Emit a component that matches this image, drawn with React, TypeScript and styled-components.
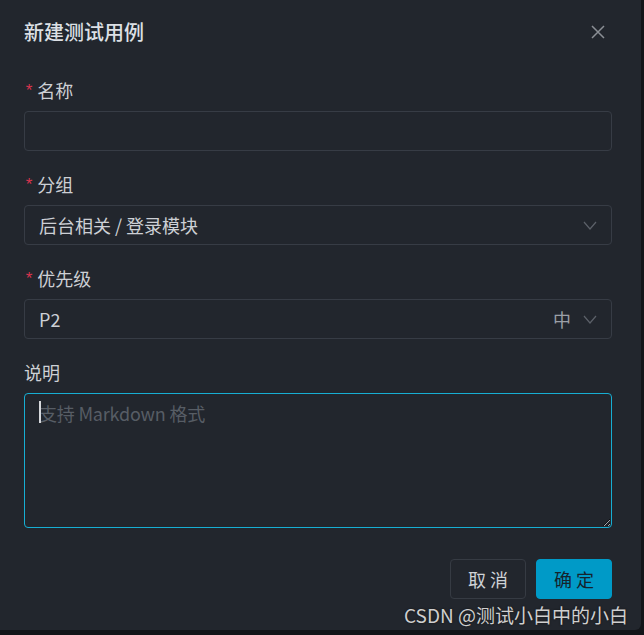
import styled, { createGlobalStyle } from 'styled-components';

const GlobalStyle = createGlobalStyle`
    html, body {
        margin: 0;
        padding: 0;
        background: #131519;
    }
    body {
        font-family: "Noto Sans CJK SC", "Noto Sans", sans-serif;
    }
`

const Dialog = styled.div`
    position: relative;
    box-sizing: border-box;
    width: 641px;
    height: 630px;
    padding: 20px 29px 0 24px;
    background: #22262d;
    border-bottom-right-radius: 6px;
    overflow: hidden;
`

const Header = styled.div`
    display: flex;
    align-items: center;
    justify-content: space-between;
    height: 24px;
    margin-bottom: 34px;
`

const Title = styled.div`
    font-size: 20px;
    font-weight: 500;
    color: #dde0e5;
    line-height: 24px;
`

const CloseButton = styled.button`
    display: grid;
    place-items: center;
    width: 20px;
    height: 20px;
    margin-right: 4px;
    padding: 0;
    border: none;
    background: none;
    cursor: pointer;
`

const Field = styled.div`
    display: flex;
    flex-direction: column;
    margin-bottom: 21px;
`

const Label = styled.label`
    display: flex;
    align-items: center;
    gap: 3px;
    height: 24px;
    margin-bottom: 9px;
    font-size: 18px;
    color: #cdd0d5;
`

const Required = styled.span`
    font-family: "Liberation Mono", monospace;
    font-size: 17px;
    color: #d8344d;
    line-height: 1;
    margin-top: 3px;
`

const Input = styled.input`
    box-sizing: border-box;
    height: 40px;
    width: 100%;
    padding: 0 14px;
    border: 1px solid #373c45;
    border-radius: 4px;
    background: #22262d;
    color: #cdd0d5;
    font: inherit;
    font-size: 18px;
    outline: none;
`

const Select = styled.div`
    box-sizing: border-box;
    display: flex;
    align-items: center;
    gap: 12px;
    height: 40px;
    padding: 0 14px 0 14px;
    border: 1px solid #373c45;
    border-radius: 4px;
    font-size: 18px;
    color: #cdd0d5;
`

const SelectValue = styled.span`
    flex: 1;
`

const SelectHint = styled.span`
    color: #9b9fa6;
`

const TextAreaWrap = styled.div`
    position: relative;
`

const TextArea = styled.textarea`
    box-sizing: border-box;
    display: block;
    width: 100%;
    height: 135px;
    padding: 6px 14px;
    border: 1px solid #17aed3;
    border-radius: 4px;
    background: #22262d;
    color: #cdd0d5;
    font: inherit;
    font-size: 18px;
    letter-spacing: -0.2px;
    line-height: 26px;
    resize: vertical;
    outline: none;
    color-scheme: dark;

    &::placeholder {
        color: #575d65;
    }
`

const Caret = styled.span`
    position: absolute;
    left: 15px;
    top: 8px;
    width: 1.5px;
    height: 22px;
    background: #d6d8dc;
`

const Footer = styled.div`
    display: flex;
    justify-content: flex-end;
    gap: 10px;
    margin-top: 31px;
`

const Button = styled.button<{ $primary?: boolean }>`
    box-sizing: border-box;
    width: 76px;
    height: 40px;
    border-radius: 4px;
    border: 1px solid ${(p) => (p.$primary ? '#009ac7' : '#363b43')};
    background: ${(p) => (p.$primary ? '#009ac7' : '#22262d')};
    color: ${(p) => (p.$primary ? '#15232c' : '#cfd2d6')};
    font-family: "Noto Sans CJK SC", sans-serif;
    font-size: 18px;
    letter-spacing: 4px;
    padding: 0 0 0 4px;
    cursor: pointer;
`

const Watermark = styled.div`
    position: absolute;
    right: 13px;
    bottom: 3px;
    font-size: 19px;
    color: #cfcfcf;
    text-shadow: 0 0 2px #111;
    line-height: 24px;
    pointer-events: none;
`

const Chevron = () => (
    <svg width="14" height="9" viewBox="0 0 14 9" fill="none">
        <path d="M1 1 L7 8 L13 1" stroke="#5c6169" strokeWidth="1.2" />
    </svg>
)

const CloseIcon = () => (
    <svg width="14" height="14" viewBox="0 0 14 14" fill="none">
        <path d="M1 1 L13 13 M13 1 L1 13" stroke="#8b8f95" strokeWidth="1.5" />
    </svg>
)

export default function App() {
    return <>
        <GlobalStyle />
        <Dialog>
            <Header>
                <Title>新建测试用例</Title>
                <CloseButton aria-label="关闭"><CloseIcon /></CloseButton>
            </Header>

            <Field>
                <Label><Required>*</Required>名称</Label>
                <Input />
            </Field>

            <Field>
                <Label><Required>*</Required>分组</Label>
                <Select>
                    <SelectValue>后台相关 / 登录模块</SelectValue>
                    <Chevron />
                </Select>
            </Field>

            <Field>
                <Label><Required>*</Required>优先级</Label>
                <Select>
                    <SelectValue>P2</SelectValue>
                    <SelectHint>中</SelectHint>
                    <Chevron />
                </Select>
            </Field>

            <Field>
                <Label>说明</Label>
                <TextAreaWrap>
                    <TextArea placeholder="支持 Markdown 格式" />
                    <Caret />
                </TextAreaWrap>
            </Field>

            <Footer>
                <Button>取消</Button>
                <Button $primary>确定</Button>
            </Footer>

            <Watermark>CSDN @测试小白中的小白</Watermark>
        </Dialog>
    </>
}
